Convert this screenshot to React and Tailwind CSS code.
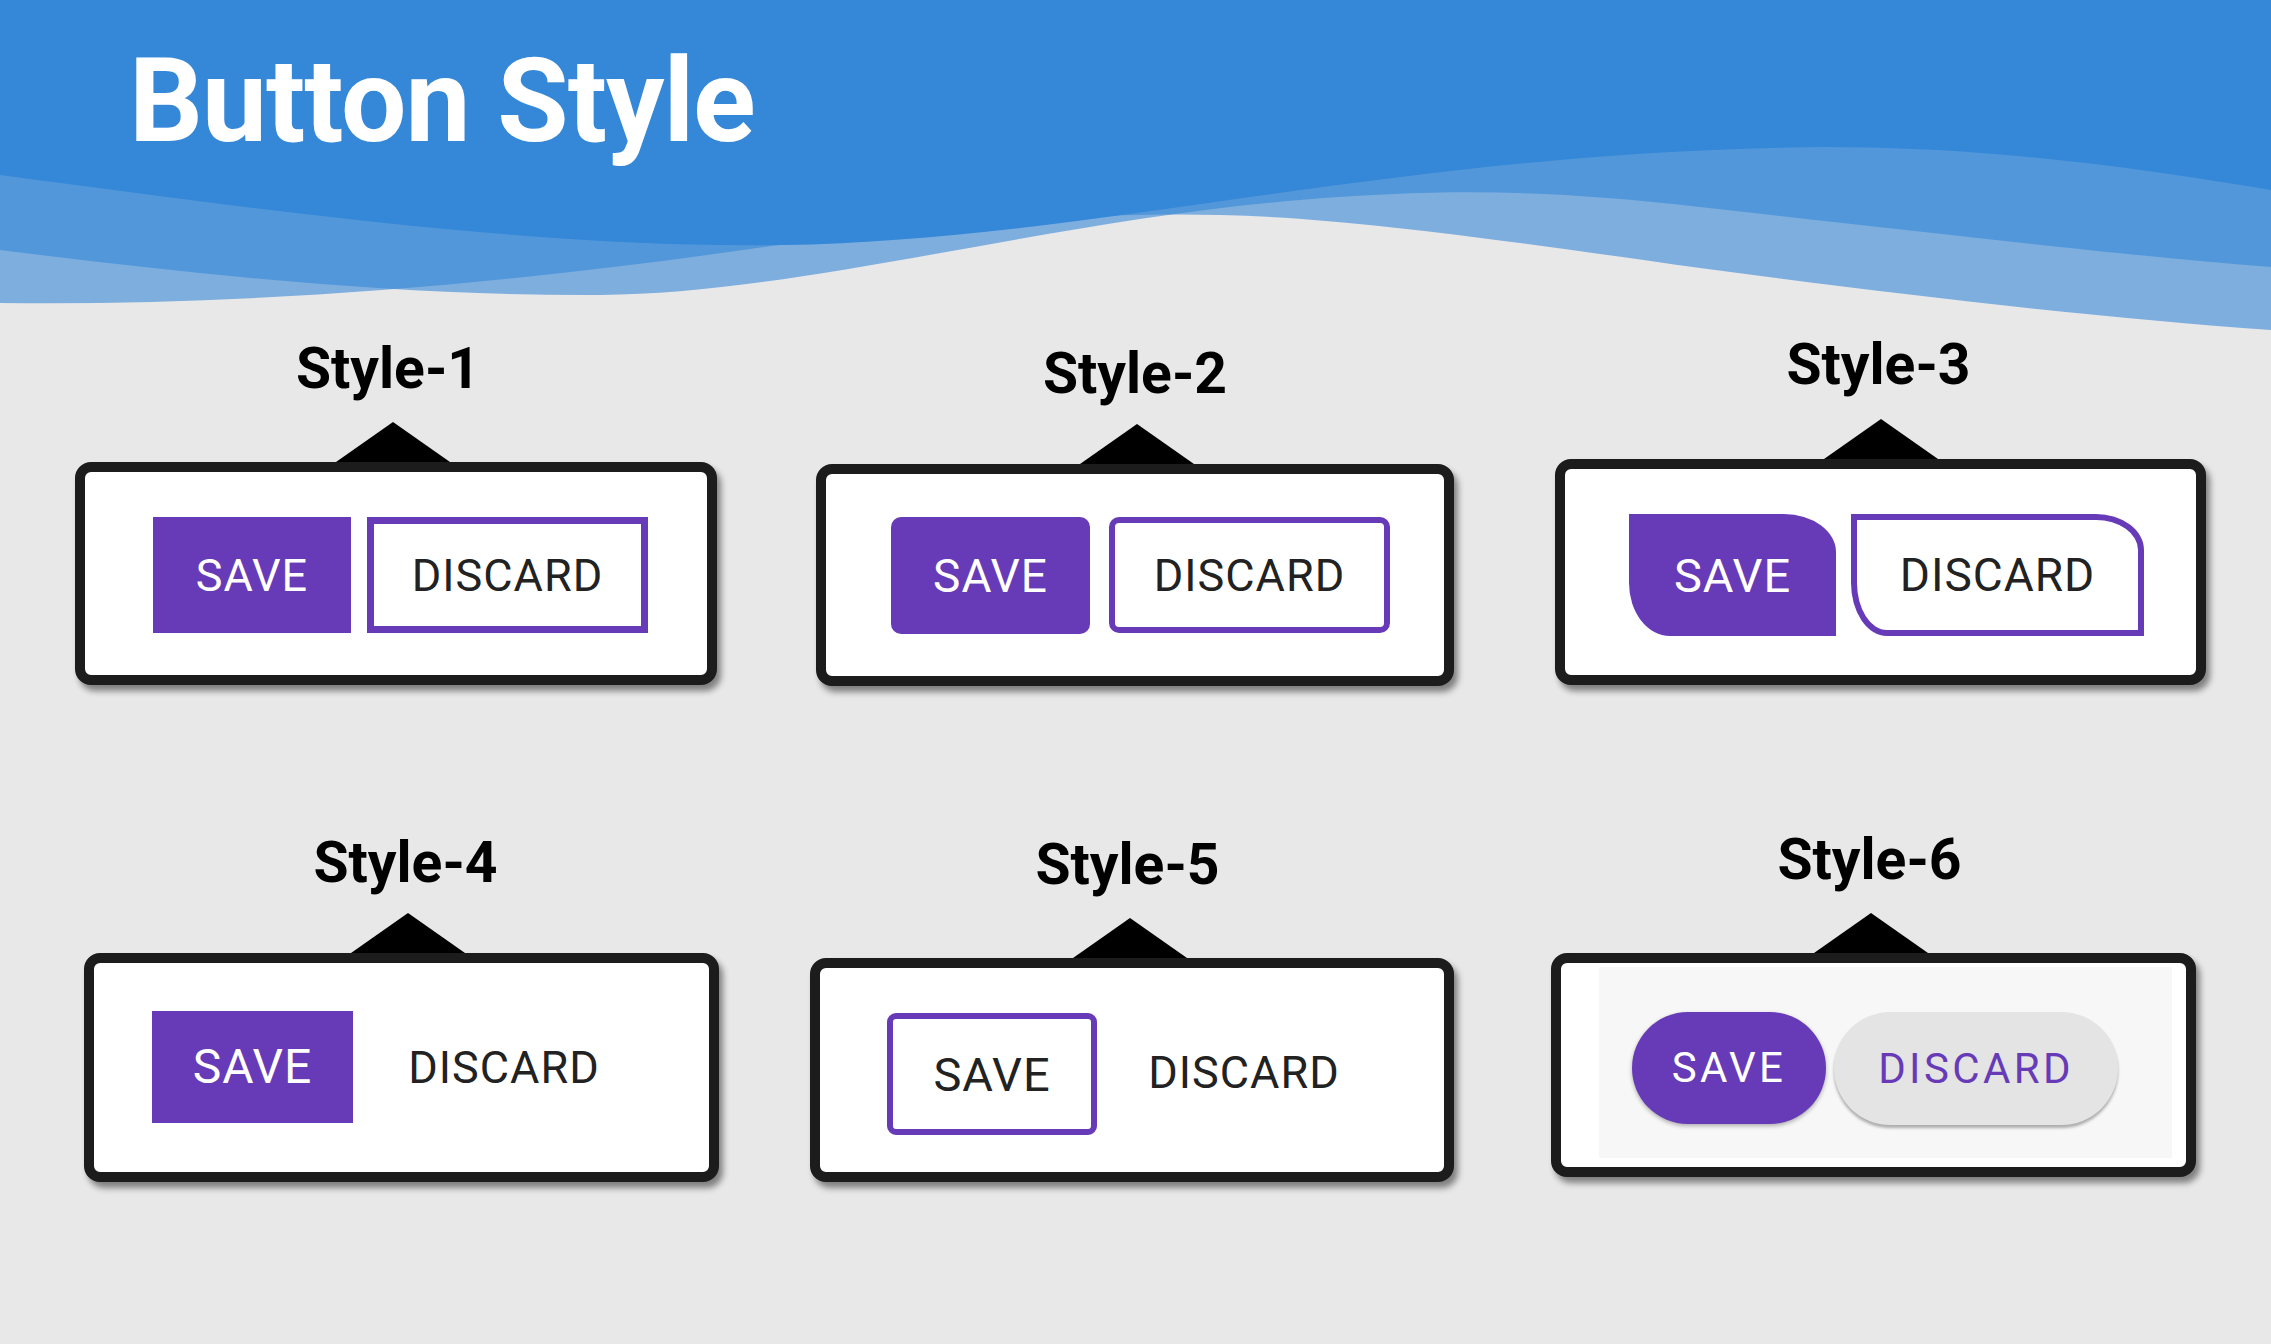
const PURPLE = "bg-[#673ab7]";

const Triangle = ({ className = "" }) => (
  <div
    className={`h-0 w-0 border-x-[57px] border-b-[40px] border-x-transparent border-b-black ${className}`}
  />
);

const Column = ({ label, colClass, labelClass, gapClass, triClass, cardClass, children }) => (
  <div className={`flex shrink-0 flex-col items-center ${colClass}`}>
    <div className={`text-[57px] font-bold leading-none text-black ${labelClass}`}>{label}</div>
    <Triangle className={`${gapClass} ${triClass}`} />
    <div
      className={`w-full rounded-[16px] border-[10px] border-[#1c1c1c] bg-white shadow-[4px_6px_6px_rgba(0,0,0,0.45)] ${cardClass}`}
    >
      {children}
    </div>
  </div>
);

const Header = () => (
  <header className="relative h-[330px]">
    <svg
      className="absolute left-0 top-0 h-[340px] w-full"
      viewBox="0 0 2271 340"
      preserveAspectRatio="none"
    >
      {/* back waves, half see-through */}
      <path
        d="M0,0 H2271 V267 C2150,258 1950,235 1700,207 C1550,190 1450,188 1300,200 C1050,220 800,294 600,295 C400,296 200,275 0,250 Z"
        fill="#3587d7"
        fillOpacity="0.6"
      />
      <path
        d="M0,0 H2271 V330 C2100,318 1900,295 1700,268 C1500,240 1350,218 1221,215 C1100,212 950,222 757,248 C500,285 250,306 0,303 Z"
        fill="#3587d7"
        fillOpacity="0.6"
      />
      {/* solid top */}
      <path
        d="M0,0 H2271 V190 C2150,170 2000,147 1825,147 C1400,150 1100,240 782,245 C550,248 300,215 0,175 Z"
        fill="#3587d7"
      />
    </svg>
    <h1 className="relative pl-[129px] pt-[43px] text-[116px] font-bold leading-none tracking-[-1px] text-white">
      Button Style
    </h1>
  </header>
);

export default function App() {
  return (
    <div className="min-h-screen w-full bg-[#e8e8e8] font-['Roboto',sans-serif]">
      <Header />

      {/* row 1 */}
      <div className="flex items-start">
        <Column
          label="Style-1"
          colClass="ml-[75px] w-[642px] mt-[10px]"
          labelClass="mr-[16px]"
          gapClass="mt-[25px]"
          triClass="mr-[6px]"
          cardClass="h-[223px]"
        >
          <div className="flex gap-[16px] pl-[68px] pt-[45px]">
            <button className={`flex h-[116px] w-[198px] items-center justify-center ${PURPLE} text-[45px] leading-none tracking-[1px] text-white`}>
              SAVE
            </button>
            <button className="flex h-[116px] w-[281px] items-center justify-center border-[7px] border-[#673ab7] bg-white text-[45px] leading-none tracking-[1px] text-[#222]">
              DISCARD
            </button>
          </div>
        </Column>

        <Column
          label="Style-2"
          colClass="ml-[99px] w-[638px] mt-[15px]"
          labelClass=""
          gapClass="mt-[22px]"
          triClass="ml-[4px]"
          cardClass="h-[222px]"
        >
          <div className="flex gap-[19px] pl-[65px] pt-[43px]">
            <button className={`flex h-[117px] w-[199px] items-center justify-center rounded-[10px] ${PURPLE} text-[46px] leading-none tracking-[1px] text-white`}>
              SAVE
            </button>
            <button className="flex h-[116px] w-[281px] items-center justify-center rounded-[10px] border-[6px] border-[#673ab7] bg-white text-[45px] leading-none tracking-[1px] text-[#222]">
              DISCARD
            </button>
          </div>
        </Column>

        <Column
          label="Style-3"
          colClass="ml-[101px] w-[651px] mt-[6px]"
          labelClass="mr-[4px]"
          gapClass="mt-[26px]"
          triClass=""
          cardClass="h-[226px]"
        >
          <div className="flex gap-[15px] pl-[64px] pt-[45px]">
            <button className={`flex h-[122px] w-[207px] items-center justify-center rounded-tr-[52px_38px] rounded-bl-[41px_53px] ${PURPLE} text-[47px] leading-none tracking-[1px] text-white`}>
              SAVE
            </button>
            <button className="flex h-[122px] w-[293px] items-center justify-center rounded-tr-[48px_36px] rounded-bl-[36px_53px] border-[6px] border-[#673ab7] bg-white text-[46px] leading-none tracking-[1px] text-[#222]">
              DISCARD
            </button>
          </div>
        </Column>
      </div>

      {/* row 2 */}
      <div className="mt-[145px] flex items-start">
        <Column
          label="Style-4"
          colClass="ml-[84px] w-[635px] mt-[3px]"
          labelClass="ml-[8px]"
          gapClass="mt-[22px]"
          triClass="ml-[13px]"
          cardClass="h-[229px]"
        >
          <div className="flex gap-[16px] pl-[58px] pt-[48px]">
            <button className={`flex h-[112px] w-[201px] items-center justify-center ${PURPLE} text-[48px] leading-none tracking-[1px] text-white`}>
              SAVE
            </button>
            <button className="flex h-[112px] w-[270px] items-center justify-center text-[45px] leading-none tracking-[1px] text-[#222]">
              DISCARD
            </button>
          </div>
        </Column>

        <Column
          label="Style-5"
          colClass="ml-[91px] w-[644px] mt-[5px]"
          labelClass="mr-[9px]"
          gapClass="mt-[25px]"
          triClass="mr-[4px]"
          cardClass="h-[224px]"
        >
          <div className="flex gap-[16px] pl-[67px] pt-[45px]">
            <button className="flex h-[122px] w-[210px] items-center justify-center rounded-[9px] border-[6px] border-[#673ab7] bg-white text-[47px] leading-none tracking-[1px] text-[#222]">
              SAVE
            </button>
            <button className="flex h-[118px] w-[262px] items-center justify-center text-[45px] leading-none tracking-[1px] text-[#222]">
              DISCARD
            </button>
          </div>
        </Column>

        <Column
          label="Style-6"
          colClass="ml-[97px] w-[645px] mt-[0px]"
          labelClass="mr-[8px]"
          gapClass="mt-[25px]"
          triClass="mr-[5px]"
          cardClass="h-[224px]"
        >
          <div className="ml-[38px] mt-[4px] h-[191px] w-[573px] bg-[#f7f7f7] pl-[33px] pt-[45px]">
            <div className="flex gap-[8px]">
              <button className={`flex h-[112px] w-[194px] items-center justify-center rounded-full ${PURPLE} text-[42px] leading-none tracking-[0.08em] text-white shadow-[0_2px_4px_rgba(0,0,0,0.3)]`}>
                SAVE
              </button>
              <button className="flex h-[113px] w-[284px] items-center justify-center rounded-full bg-[#e4e4e4] text-[42px] leading-none tracking-[0.08em] text-[#673ab7] shadow-[0_3px_3px_rgba(0,0,0,0.3)]">
                DISCARD
              </button>
            </div>
          </div>
        </Column>
      </div>
    </div>
  );
}
